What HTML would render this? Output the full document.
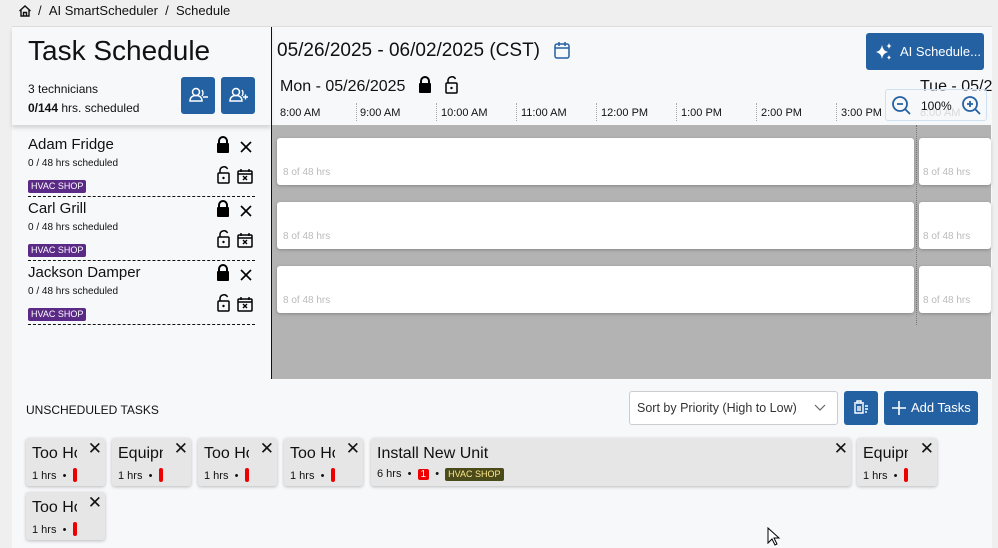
<!DOCTYPE html>
<html><head><meta charset="utf-8"><style>
*{box-sizing:border-box;margin:0;padding:0}
body{width:998px;height:548px;overflow:hidden;background:#efefef;font-family:"Liberation Sans",sans-serif;color:#111;position:relative}
.a{position:absolute}
.btn{position:absolute;background:#2461a3;border-radius:3px;color:#fff}
.tag{display:inline-block;background:#5b2a86;color:#fff;font-size:9px;padding:1px 3px;border-radius:2px;line-height:11px}
.bar{position:absolute;background:#fff;border-radius:3px;box-shadow:0 1px 3px rgba(0,0,0,.25)}
.bar span{position:absolute;left:6px;top:29px;font-size:10px;color:#bbb}
.card{position:absolute;background:#e6e6e6;border-radius:3px;box-shadow:0 1px 3px rgba(0,0,0,.25);overflow:hidden}
.card .t{position:absolute;left:6px;top:7px;font-size:16px;white-space:nowrap}
.card .x{position:absolute;right:3px;top:1px;font-size:17px}
.card .s{position:absolute;left:6px;top:30px;font-size:11px;white-space:nowrap}
.red{display:inline-block;width:4px;height:14px;background:#e00;border-radius:2px;vertical-align:-3px}
.hr{position:absolute;font-size:11px;top:107px}
.tick{position:absolute;top:103px;height:18px;border-left:1px dotted #aaa}
</style></head><body>
<svg class="a" style="left:18px;top:4px" width="14" height="14" viewBox="0 0 14 14"><path d="M1.5 7 7 2l5.5 5M3 6v6h8V6M5.5 12V8.5h3V12" fill="none" stroke="#111" stroke-width="1.4"/></svg>
<div class="a" style="left:38px;top:3px;font-size:13px">/ &nbsp;AI SmartScheduler &nbsp;/ &nbsp;Schedule</div>
<div class="a" style="left:12px;top:26px;width:980px;height:522px;background:#f7f8fa;border-top:1px solid #ddd"></div>
<div class="a" style="left:12px;top:27px;width:259px;height:98px;box-shadow:0 3px 4px rgba(0,0,0,.15);background:#f7f8fa"></div>
<div class="a" style="left:28px;top:35px;font-size:28px">Task Schedule</div>
<div class="a" style="left:28px;top:80px;font-size:12px;line-height:19px">3 technicians<br><b>0/144</b> hrs. scheduled</div>
<div class="btn" style="left:181px;top:77px;width:34px;height:37px"><svg width="34" height="37" viewBox="0 0 34 37"><circle cx="15" cy="15" r="3.5" fill="none" stroke="#fff" stroke-width="1.5"/><path d="M9 24c0-4 3-5.5 6-5.5s6 1.5 6 5.5z" fill="none" stroke="#fff" stroke-width="1.5"/><path d="M21 13q2 3 0 6M22 20h5" stroke="#fff" stroke-width="1.4" fill="none"/></svg></div>
<div class="btn" style="left:221px;top:77px;width:34px;height:37px"><svg width="34" height="37" viewBox="0 0 34 37"><circle cx="15" cy="15" r="3.5" fill="none" stroke="#fff" stroke-width="1.5"/><path d="M9 24c0-4 3-5.5 6-5.5s6 1.5 6 5.5z" fill="none" stroke="#fff" stroke-width="1.5"/><path d="M21 13q2 3 0 6M22 20h5M24.5 17.5v5" stroke="#fff" stroke-width="1.4" fill="none"/></svg></div>
<div class="a" style="left:271px;top:27px;width:1px;height:352px;background:#111"></div>
<div class="a" style="left:28px;top:136px;font-size:15px">Adam Fridge</div>
<div class="a" style="left:28px;top:158px;font-size:10px">0 / 48 hrs scheduled</div>
<div class="a" style="left:28px;top:176px"><span class="tag">HVAC SHOP</span></div>
<div class="a" style="left:28px;top:200px;font-size:15px">Carl Grill</div>
<div class="a" style="left:28px;top:222px;font-size:10px">0 / 48 hrs scheduled</div>
<div class="a" style="left:28px;top:240px"><span class="tag">HVAC SHOP</span></div>
<div class="a" style="left:28px;top:264px;font-size:15px">Jackson Damper</div>
<div class="a" style="left:28px;top:286px;font-size:10px">0 / 48 hrs scheduled</div>
<div class="a" style="left:28px;top:304px"><span class="tag">HVAC SHOP</span></div>
<div class="a" style="left:28px;top:196px;width:227px;border-top:1px dashed #111"></div>
<div class="a" style="left:28px;top:260px;width:227px;border-top:1px dashed #111"></div>
<div class="a" style="left:28px;top:324px;width:227px;border-top:1px dashed #111"></div>
<svg class="a" style="left:214px;top:136px" width="46" height="190" viewBox="0 0 46 190">
<g id="g"><path d="M5 7V5a4 4 0 0 1 8 0v2" fill="none" stroke="#000" stroke-width="2"/><rect x="3" y="7" width="12" height="10" rx="1" fill="#000"/>
<path d="M27 6l10 10M37 6 27 16" stroke="#000" stroke-width="1.6"/>
<path d="M6 37v-3a4 4 0 0 1 7.5-1" fill="none" stroke="#000" stroke-width="1.5"/><rect x="4" y="37" width="11" height="10" rx="1" fill="none" stroke="#000" stroke-width="1.5"/><circle cx="9.5" cy="42" r="1.2"/>
<rect x="24" y="35" width="14" height="12" rx="1" fill="none" stroke="#000" stroke-width="1.5"/><path d="M24 38h14M27 33v3M35 33v3M29 40l4 4M33 40l-4 4" stroke="#000" stroke-width="1.4"/></g>
<use href="#g" y="64"/><use href="#g" y="128"/></svg>
<div class="a" style="left:277px;top:40px;font-size:19px">05/26/2025 - 06/02/2025 (CST)</div>
<svg class="a" style="left:553px;top:41px" width="18" height="19" viewBox="0 0 18 19"><rect x="2" y="3" width="14" height="14" rx="2" fill="none" stroke="#2461a3" stroke-width="1.5"/><path d="M2 7h14M6 1v4M12 1v4" stroke="#2461a3" stroke-width="1.5"/></svg>
<div class="btn" style="left:866px;top:33px;width:118px;height:37px;font-size:13px;line-height:37px;padding-left:34px">AI Schedule...</div>
<svg class="a" style="left:874px;top:42px" width="20" height="20" viewBox="0 0 20 20"><path d="M8 3q1 6 6 7-5 1-6 7-1-6-6-7 5-1 6-7z" fill="#fff"/><path d="M15 1q.5 2.5 2.5 3-2 .5-2.5 3-.5-2.5-2.5-3 2-.5 2.5-3zM15 13q.4 2 2 2.5-1.6.5-2 2.5-.4-2-2-2.5 1.6-.5 2-2.5z" fill="#fff"/></svg>
<div class="a" style="left:280px;top:78px;font-size:16px">Mon - 05/26/2025</div>
<svg class="a" style="left:416px;top:76px" width="46" height="20" viewBox="0 0 46 20"><path d="M5 7V5a4 4 0 0 1 8 0v2" fill="none" stroke="#000" stroke-width="2"/><rect x="3" y="7" width="12" height="10" rx="1" fill="#000"/><path d="M32 7V4a4 4 0 0 1 7.5-1" fill="none" stroke="#000" stroke-width="1.5"/><rect x="30" y="7" width="11" height="10" rx="1" fill="none" stroke="#000" stroke-width="1.5"/><circle cx="35.5" cy="12" r="1.2"/></svg>
<div class="a" style="left:920px;top:78px;font-size:16px;white-space:nowrap;width:72px;overflow:hidden">Tue - 05/27</div>
<div class="hr" style="left:280px">8:00 AM</div>
<div class="tick" style="left:356px"></div><div class="hr" style="left:360px">9:00 AM</div>
<div class="tick" style="left:436px"></div><div class="hr" style="left:441px">10:00 AM</div>
<div class="tick" style="left:516px"></div><div class="hr" style="left:521px">11:00 AM</div>
<div class="tick" style="left:596px"></div><div class="hr" style="left:601px">12:00 PM</div>
<div class="tick" style="left:676px"></div><div class="hr" style="left:681px">1:00 PM</div>
<div class="tick" style="left:756px"></div><div class="hr" style="left:761px">2:00 PM</div>
<div class="tick" style="left:836px"></div><div class="hr" style="left:841px">3:00 PM</div>
<div class="hr" style="left:920px;color:#aaa">8:00 AM</div>
<div class="a" style="left:885px;top:89px;width:102px;height:32px;border:1px solid #cfe0f0;border-radius:3px;background:rgba(247,248,250,.6)"></div>
<div class="a" style="left:921px;top:99px;font-size:12px">100%</div>
<svg class="a" style="left:890px;top:94px" width="95" height="22" viewBox="0 0 95 22"><circle cx="10" cy="10" r="7" fill="none" stroke="#2461a3" stroke-width="1.8"/><path d="M15 15l5 5M7 10h6" stroke="#2461a3" stroke-width="1.8"/><circle cx="80" cy="10" r="7" fill="none" stroke="#2461a3" stroke-width="1.8"/><path d="M85 15l5 5M77 10h6M80 7v6" stroke="#2461a3" stroke-width="1.8"/></svg>
<div class="a" style="left:272px;top:125px;width:719px;height:254px;background:#b3b3b3"></div>
<div class="a" style="left:916px;top:125px;height:200px;border-left:1px dotted #777"></div>
<div class="bar" style="left:277px;top:138px;width:637px;height:47px"><span>8 of 48 hrs</span></div>
<div class="bar" style="left:919px;top:138px;width:72px;height:47px"><span style="left:4px">8 of 48 hrs</span></div>
<div class="bar" style="left:277px;top:202px;width:637px;height:47px"><span>8 of 48 hrs</span></div>
<div class="bar" style="left:919px;top:202px;width:72px;height:47px"><span style="left:4px">8 of 48 hrs</span></div>
<div class="bar" style="left:277px;top:266px;width:637px;height:47px"><span>8 of 48 hrs</span></div>
<div class="bar" style="left:919px;top:266px;width:72px;height:47px"><span style="left:4px">8 of 48 hrs</span></div>
<div class="a" style="left:26px;top:403px;font-size:12px">UNSCHEDULED TASKS</div>
<div class="a" style="left:629px;top:391px;width:209px;height:34px;background:#fff;border:1px solid #ccc;border-radius:3px;font-size:12.5px;line-height:32px;padding-left:7px;color:#333">Sort by Priority (High to Low)</div>
<svg class="a" style="left:814px;top:404px" width="12" height="8" viewBox="0 0 12 8"><path d="M1 1l5 5 5-5" fill="none" stroke="#666" stroke-width="1.2"/></svg>
<div class="btn" style="left:844px;top:391px;width:34px;height:34px"><svg width="34" height="34" viewBox="0 0 34 34"><path d="M10 12h10M13 12v-2h4v2M11 13v9h8v-9M14 15v5M16 15v5M21 15h3M21 18h3M21 21h2" stroke="#fff" stroke-width="1.4" fill="none"/></svg></div>
<div class="btn" style="left:884px;top:391px;width:94px;height:34px;font-size:13px;line-height:34px;padding-left:27px">Add Tasks</div>
<svg class="a" style="left:892px;top:401px" width="14" height="14" viewBox="0 0 14 14"><path d="M7 0v14M0 7h14" stroke="#fff" stroke-width="1.6"/></svg>
<div class="card" style="left:26px;top:438px;width:79px;height:48px"><div class="t" style="width:45px;overflow:hidden">Too Hot</div><div class="x">✕</div><div class="s">1 hrs &nbsp;•&nbsp; <span class="red"></span></div></div>
<div class="card" style="left:112px;top:438px;width:79px;height:48px"><div class="t" style="width:45px;overflow:hidden">Equipment</div><div class="x">✕</div><div class="s">1 hrs &nbsp;•&nbsp; <span class="red"></span></div></div>
<div class="card" style="left:198px;top:438px;width:79px;height:48px"><div class="t" style="width:45px;overflow:hidden">Too Hot</div><div class="x">✕</div><div class="s">1 hrs &nbsp;•&nbsp; <span class="red"></span></div></div>
<div class="card" style="left:284px;top:438px;width:79px;height:48px"><div class="t" style="width:45px;overflow:hidden">Too Hot</div><div class="x">✕</div><div class="s">1 hrs &nbsp;•&nbsp; <span class="red"></span></div></div>
<div class="card" style="left:371px;top:438px;width:480px;height:48px"><div class="t">Install New Unit</div><div class="x">✕</div><div class="s">6 hrs &nbsp;•&nbsp; <span style="display:inline-block;background:#e00;color:#fff;border-radius:2px;padding:0 3px;font-size:10px">1</span> &nbsp;•&nbsp; <span class="tag" style="background:#4a4a1a;color:#ffe88a">HVAC SHOP</span></div></div>
<div class="card" style="left:857px;top:438px;width:80px;height:48px"><div class="t" style="width:45px;overflow:hidden">Equipment</div><div class="x">✕</div><div class="s">1 hrs &nbsp;•&nbsp; <span class="red"></span></div></div>
<div class="card" style="left:26px;top:492px;width:79px;height:48px"><div class="t" style="width:45px;overflow:hidden">Too Hot</div><div class="x">✕</div><div class="s">1 hrs &nbsp;•&nbsp; <span class="red"></span></div></div>
<svg class="a" style="left:767px;top:527px" width="14" height="20" viewBox="0 0 14 20"><path d="M1 1v15l4-4 3 6 2-1-3-6h5z" fill="#fff" stroke="#000"/></svg>
</body></html>
